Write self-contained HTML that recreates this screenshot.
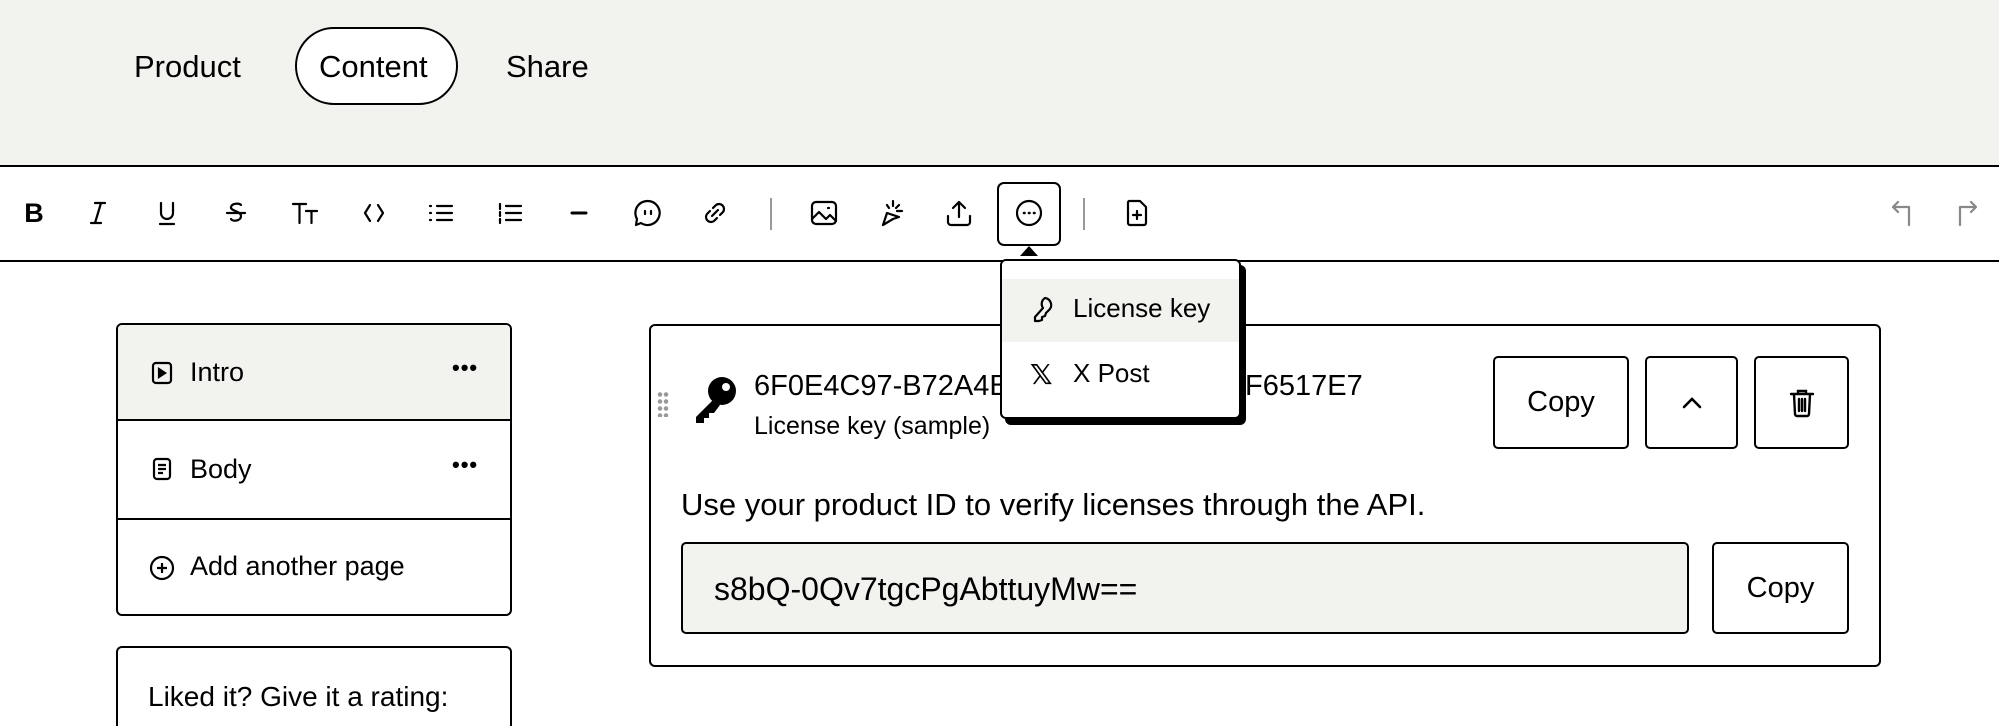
<!DOCTYPE html>
<html style="width:1999px;height:726px;overflow:hidden"><head><meta charset="utf-8"><style>
*{box-sizing:border-box;margin:0;padding:0}
body{width:1999px;height:726px;overflow:hidden;background:#fff;font-family:"Liberation Sans",sans-serif;color:#000;position:relative}
.abs{position:absolute}
.hdr{left:0;top:0;width:1999px;height:167px;background:#f2f2ee;border-bottom:2px solid #000}
.nav{font-size:31px;top:49px}
.pill{left:295px;top:27px;width:163px;height:78px;border:2px solid #000;border-radius:40px;background:#fff}
.tb{left:0;top:167px;width:1999px;height:95px;border-bottom:2px solid #000;background:#fff}
.ic{position:absolute;top:197px;width:32px;height:32px}
.ic svg{width:32px;height:32px;fill:none;stroke:#000;stroke-width:2.2;stroke-linecap:round;stroke-linejoin:round}
.sep{position:absolute;top:198px;width:2px;height:32px;background:#999}
.card{border:2px solid #000;border-radius:6px;background:#fff}
.row{position:absolute;left:0;width:100%}
.btn{position:absolute;border:2px solid #000;border-radius:5px;background:#fff;display:flex;align-items:center;justify-content:center;font-size:29px}
.st{font-size:27px}
</style></head><body>
<div class="abs hdr"></div>
<div class="abs nav" style="left:134px">Product</div>
<div class="abs pill"></div>
<div class="abs nav" style="left:319px">Content</div>
<div class="abs nav" style="left:506px">Share</div>

<div class="abs tb"></div>
<div class="ic" style="left:18px;font-weight:bold;font-size:27px;text-align:center;line-height:32px">B</div>
<div class="ic" style="left:82px"><svg viewBox="0 0 32 32"><path d="M13 6h10M9 26h10M19 6l-6 20"/></svg></div>
<div class="ic" style="left:151px"><svg viewBox="0 0 32 32"><path d="M10 6v10a6 6 0 0 0 12 0V6M9 27h14"/></svg></div>
<div class="ic" style="left:220px"><svg viewBox="0 0 32 32"><path d="M21 8c-2-2-9-2-10 2s10 4 10 9-8 6-10 3M7 16h18"/></svg></div>
<div class="ic" style="left:289px"><svg viewBox="0 0 32 32"><path d="M4 7h13M10.5 7v19M17 14h11M22.5 14v12"/></svg></div>
<div class="ic" style="left:358px"><svg viewBox="0 0 32 32"><path d="M12 8l-5 8 5 8M20 8l5 8-5 8"/></svg></div>
<div class="ic" style="left:425px"><svg viewBox="0 0 32 32"><path d="M12 9h15M12 16h15M12 23h15M5 9h1M5 16h1M5 23h1"/></svg></div>
<div class="ic" style="left:494px"><svg viewBox="0 0 32 32"><path d="M12 9h15M12 16h15M12 23h15M6 7v5M6 15v4M6 22v4" stroke-width="2.2"/></svg></div>
<div class="ic" style="left:563px"><svg viewBox="0 0 32 32"><path d="M9 16h14" stroke-width="3"/></svg></div>
<div class="ic" style="left:632px"><svg viewBox="0 0 32 32"><path d="M16 4a12 12 0 1 1-7 22l-5 2 1-6A12 12 0 0 1 16 4zM13 14v3M19 14v3"/></svg></div>
<div class="ic" style="left:699px"><svg viewBox="0 0 32 32"><path d="M14 11l3-3a5 5 0 0 1 7 7l-3 3M18 21l-3 3a5 5 0 0 1-7-7l3-3M13 19l6-6"/></svg></div>
<div class="sep" style="left:770px"></div>
<div class="ic" style="left:808px"><svg viewBox="0 0 32 32"><rect x="4" y="5" width="24" height="22" rx="4"/><path d="M4 22l7-7 7 7 4-4 6 6M20 11h1"/></svg></div>
<div class="ic" style="left:875px"><svg viewBox="0 0 32 32"><path d="M8 28l4-12 12 4-6 2zM18 4v5M24 8l-3 3M27 14h-5M12 8l2 3"/></svg></div>
<div class="ic" style="left:943px"><svg viewBox="0 0 32 32"><path d="M16 20V5M10 11l6-6 6 6M5 19v6a3 3 0 0 0 3 3h16a3 3 0 0 0 3-3v-6"/></svg></div>
<div class="abs" style="left:997px;top:182px;width:64px;height:64px;border:2px solid #000;border-radius:7px;background:#fff"></div>
<div class="ic" style="left:1013px"><svg viewBox="0 0 32 32"><circle cx="16" cy="16" r="12"/><path d="M11 16h.5M16 16h.5M21 16h.5" stroke-width="2.6"/></svg></div>
<div class="abs" style="left:1020px;top:246px;width:0;height:0;border-left:9px solid transparent;border-right:9px solid transparent;border-bottom:10px solid #000"></div>
<div class="sep" style="left:1083px"></div>
<div class="ic" style="left:1121px"><svg viewBox="0 0 32 32"><path d="M8 4h11l6 6v16a2 2 0 0 1-2 2H9a2 2 0 0 1-2-2V6a2 2 0 0 1 1-2zM16 14v8M12 18h8"/></svg></div>
<div class="ic" style="left:1888px"><svg viewBox="0 0 32 32" style="stroke:#888"><path d="M10 5l-5 5 5 5M5 10h16v18"/></svg></div>
<div class="ic" style="left:1949px"><svg viewBox="0 0 32 32" style="stroke:#888"><path d="M22 5l5 5-5 5M27 10H11v18"/></svg></div>

<!-- sidebar -->
<div class="abs card" style="left:116px;top:323px;width:396px;height:293px;overflow:hidden">
 <div class="row" style="top:0;height:96px;background:#f2f2ee;border-bottom:2px solid #000"></div>
 <div class="row" style="top:96px;height:99px;border-bottom:2px solid #000"></div>
</div>
<svg class="abs" style="left:150px;top:361px" width="24" height="24" viewBox="0 0 24 24" fill="none" stroke="#000" stroke-width="2.2"><rect x="3" y="2" width="18" height="20" rx="3"/><path d="M9 8v8l6-4z" fill="#000"/></svg>
<div class="abs st" style="left:190px;top:357px">Intro</div>
<div class="abs" style="left:452px;top:355px;font-size:22px;font-weight:bold;letter-spacing:1px">•••</div>
<svg class="abs" style="left:150px;top:457px" width="24" height="24" viewBox="0 0 24 24" fill="none" stroke="#000" stroke-width="2.2"><rect x="4" y="2" width="16" height="20" rx="3"/><path d="M8 8h8M8 12h8M8 16h5"/></svg>
<div class="abs st" style="left:190px;top:454px">Body</div>
<div class="abs" style="left:452px;top:452px;font-size:22px;font-weight:bold;letter-spacing:1px">•••</div>
<svg class="abs" style="left:149px;top:555px" width="26" height="26" viewBox="0 0 26 26" fill="none" stroke="#000" stroke-width="2.2"><circle cx="13" cy="13" r="11"/><path d="M13 8v10M8 13h10"/></svg>
<div class="abs st" style="left:190px;top:551px">Add another page</div>
<div class="abs" style="left:116px;top:646px;width:396px;height:80px;border:2px solid #000;border-bottom:none;border-radius:6px 6px 0 0;background:#fff"></div>
<div class="abs" style="left:148px;top:681px;font-size:28px">Liked it? Give it a rating:</div>

<!-- main card -->
<div class="abs card" style="left:649px;top:324px;width:1232px;height:343px"></div>
<div class="abs" style="left:657px;top:391px;width:12px;height:26px;background:radial-gradient(circle,#999 2px,transparent 2.5px) 0 0/6px 7px"></div>
<svg class="abs" style="left:692px;top:375px" width="46" height="48" viewBox="0 0 46 48"><circle cx="30" cy="16" r="14" fill="#000"/><circle cx="34" cy="12" r="4" fill="#fff"/><path d="M22 24L4 42v6h8v-5h5v-5h5l6-8z" fill="#000"/></svg>
<div class="abs" style="left:754px;top:370px;font-size:29px">6F0E4C97-B72A4B6C-9D2E</div>
<div class="abs" style="left:1245px;top:370px;font-size:29px">F6517E7</div>
<div class="abs" style="left:754px;top:412px;font-size:25px">License key (sample)</div>
<div class="btn" style="left:1493px;top:356px;width:136px;height:93px">Copy</div>
<div class="btn" style="left:1645px;top:356px;width:93px;height:93px"><svg width="30" height="30" viewBox="0 0 30 30" fill="none" stroke="#000" stroke-width="2.6" stroke-linecap="round"><path d="M7 19l8-8 8 8"/></svg></div>
<div class="btn" style="left:1754px;top:356px;width:95px;height:93px"><svg width="30" height="32" viewBox="0 0 30 32" fill="none" stroke="#000" stroke-width="2.4" stroke-linecap="round"><path d="M4 7h22M11 7V4h8v3M7 7l1 20a2 2 0 0 0 2 2h10a2 2 0 0 0 2-2l1-20M12 12v12M15 12v12M18 12v12"/></svg></div>
<div class="abs" style="left:681px;top:487px;font-size:31px">Use your product ID to verify licenses through the API.</div>
<div class="abs" style="left:681px;top:542px;width:1008px;height:92px;border:2px solid #000;border-radius:5px;background:#f2f2ee"></div>
<div class="abs" style="left:714px;top:571px;font-size:32px">s8bQ-0Qv7tgcPgAbttuyMw==</div>
<div class="btn" style="left:1712px;top:542px;width:137px;height:92px">Copy</div>

<!-- dropdown -->
<div class="abs" style="left:1005px;top:265px;width:241px;height:160px;background:#000;border-radius:6px"></div>
<div class="abs" style="left:1000px;top:259px;width:241px;height:160px;background:#fff;border:2px solid #000;border-radius:6px;overflow:hidden">
 <div style="position:absolute;left:0;top:18px;width:100%;height:63px;background:#f2f2ee"></div>
</div>
<svg class="abs" style="left:1030px;top:295px" width="26" height="28" viewBox="0 0 26 28" fill="none" stroke="#000" stroke-width="2.2" stroke-linejoin="round"><path d="M15 3a7 7 0 0 1 4 12l-3 3-1 3-3 1v3l-3 1H5v-4l8-9a7 7 0 0 1 2-10z"/></svg>
<div class="abs" style="left:1073px;top:293px;font-size:26px">License key</div>
<div class="abs" style="left:1030px;top:358px;font-size:28px;font-weight:bold;font-family:'DejaVu Sans',sans-serif">𝕏</div>
<div class="abs" style="left:1073px;top:358px;font-size:26px">X Post</div>
</body></html>
